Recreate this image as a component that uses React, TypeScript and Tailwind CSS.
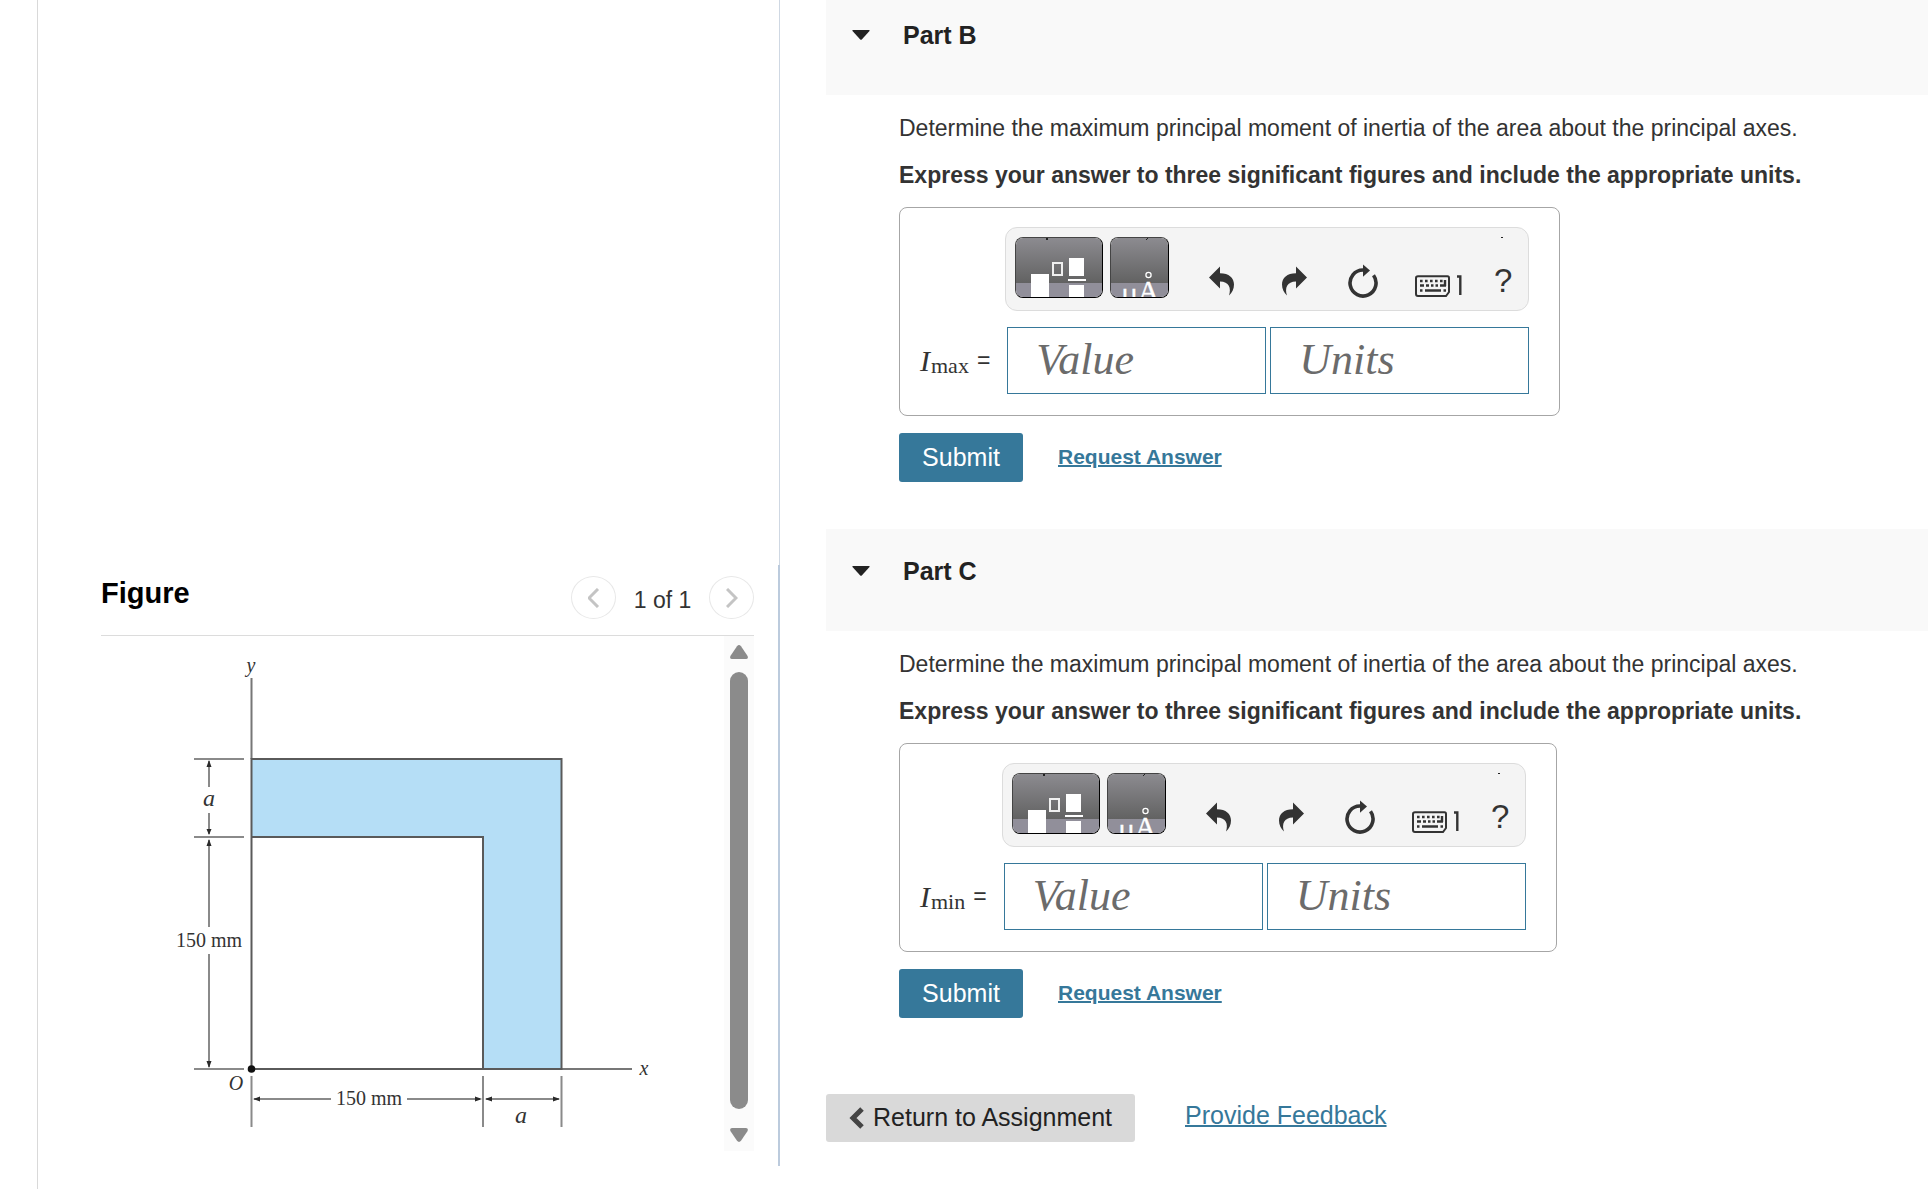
import type { ReactNode } from 'react'

type PartProps = {
  id: string
  title: string
  subscript: string
}

function TemplateIcon() {
  return (
    <svg width="86" height="59" viewBox="1 1 86 59" aria-hidden="true">
      <defs>
        <linearGradient id="templateShade" x1="0" y1="0" x2="0" y2="1">
          <stop offset="0" stopColor="#8d8c91" />
          <stop offset="1" stopColor="#626262" />
        </linearGradient>
      </defs>
      <rect width="88" height="46" fill="url(#templateShade)" />
      <rect y="46" width="88" height="15" fill="#918f9a" />
      <rect x="31" y="1" width="2" height="2" fill="#222" />
      <rect x="16" y="37" width="18" height="24" fill="#fff" />
      <rect x="38" y="26" width="9" height="12" fill="none" stroke="#f0f0f0" strokeWidth="2" />
      <rect x="54" y="21" width="15" height="18" fill="#fff" />
      <rect x="53" y="42" width="18" height="2" fill="#fff" />
      <rect x="54" y="48" width="15" height="13" fill="#fff" />
    </svg>
  )
}

function SymbolIcon() {
  return (
    <svg width="57" height="59" viewBox="1 1 57 59" aria-hidden="true">
      <rect width="59" height="46" fill="url(#templateShade)" />
      <rect y="46" width="59" height="15" fill="#918f9a" />
      <path d="M36 3l2-2" stroke="#222" />
      <circle cx="38.500" cy="38" r="2.600" fill="none" stroke="#fff" strokeWidth="1.300" />
      <g fill="#fff" stroke="#fff" strokeWidth=".4">
        <text x="12" y="66" fontSize="26" className="font-['Liberation_Sans',sans-serif]">
          μ
        </text>
        <text x="28" y="64" fontSize="29" className="font-['Liberation_Serif',serif]">
          A
        </text>
      </g>
    </svg>
  )
}

function UndoIcon() {
  return (
    <svg width="26" height="61" viewBox="0 0 26 61" fill="#333" aria-hidden="true">
      <path d="M0 40.5 11 29.5V36.2C20 36.2 25 41 25 47.5C25 52 23 56 20 58.5C22.500 51 20 44.500 11 44.500V51.500Z" />
    </svg>
  )
}

function RedoIcon() {
  return (
    <svg width="26" height="61" viewBox="0 0 26 61" fill="#333" aria-hidden="true">
      <path d="M26 40.5 15 29.5V36.2C6 36.2 1 41 1 47.5C1 52 3 56 6 58.5C3.500 51 6 44.500 15 44.500V51.500Z" />
    </svg>
  )
}

function ResetIcon() {
  return (
    <svg width="30" height="61" viewBox="0 0 30 61" aria-hidden="true">
      <path d="M15 33A13 13 0 1 0 25.5 38.3" fill="none" stroke="#333" strokeWidth="3.6" />
      <path d="M15 27.500 22 33.500 15 39.700Z" fill="#333" />
    </svg>
  )
}

function KeyboardIcon() {
  return (
    <svg width="47" height="61" viewBox="0 0 47 61" fill="none" stroke="#333" aria-hidden="true">
      <path d="M3 39.300H32.500Q34 39.300 34 41V55L31 59H3Q1 59 1 57V41Q1 39.300 3 39.300Z" strokeWidth="2" />
      <path d="M5 44H28" strokeWidth="2.4" strokeDasharray="2.600 2.400" />
      <path d="M5 48.500H9M11 48.500H14M16 48.500H18.500M20.500 48.500H23M25 48.500H31M30 43V49" strokeWidth="2.4" />
      <path d="M5 53.500H7.500M10 53.500H26M28.500 53.500H31" strokeWidth="2.4" />
      <path d="M42 39.500H45.300V58" strokeWidth="2.4" />
    </svg>
  )
}

function HelpIcon() {
  return (
    <svg width="20" height="61" viewBox="0 0 20 61" fill="#333" aria-hidden="true">
      <rect x="6" width="2" height="1" fill="#222" />
      <text x="-1" y="55" fontSize="33" className="font-['Liberation_Sans',sans-serif]">
        ?
      </text>
    </svg>
  )
}

function Toolbar() {
  return (
    <div className="flex h-[84px] w-[524px] rounded-xl border border-[#dcdcdc] bg-[#f4f4f4] px-[9px] pt-[9px]">
      <button
        aria-label="Templates"
        className="h-[61px] w-[88px] overflow-hidden rounded-lg border border-black border-t-[#444] border-l-[#444]"
      >
        <TemplateIcon />
      </button>
      <button
        aria-label="Symbols"
        className="ml-[7px] h-[61px] w-[59px] overflow-hidden rounded-lg border border-black border-t-[#444] border-l-[#444]"
      >
        <SymbolIcon />
      </button>
      <button aria-label="Undo" className="ml-10 h-[61px]">
        <UndoIcon />
      </button>
      <button aria-label="Redo" className="ml-[46px] h-[61px]">
        <RedoIcon />
      </button>
      <button aria-label="Reset" className="ml-[41px] h-[61px]">
        <ResetIcon />
      </button>
      <button aria-label="Keyboard shortcuts" className="ml-[37px] h-[61px]">
        <KeyboardIcon />
      </button>
      <button aria-label="Help" className="ml-[33px] h-[61px]">
        <HelpIcon />
      </button>
    </div>
  )
}

function Field({ id, placeholder }: { id: string; placeholder: string }) {
  return (
    <input
      id={id}
      type="text"
      aria-label={placeholder}
      placeholder={placeholder}
      className="h-[67px] w-[259px] border border-[#36789a] bg-white pb-0.5 pl-7 font-['Liberation_Serif',serif] text-[44px] text-[#333] italic placeholder:text-[#6b6b6b]"
    />
  )
}

function Part({ id, title, subscript }: PartProps) {
  return (
    <section className="pb-[47px]">
      <header className="flex h-[102px] items-start gap-[33px] bg-[#f9f9f9] pt-7 pl-[26px]">
        <button aria-label={`Collapse ${title}`} className="flex h-7 items-center">
          <svg width="18" height="10" viewBox="0 0 18 10" fill="#222" aria-hidden="true">
            <path d="M1 0H17Q18 .3 17.500 1L10 9.300Q9 10.300 8 9.300L.5 1Q0 .3 1 0Z" />
          </svg>
        </button>
        <h2 className="text-[25px] leading-7 font-bold text-[#222]">{title}</h2>
      </header>
      <div className="pt-5 pl-[73px]">
        <p className="text-[23px] leading-[27px]">
          Determine the maximum principal moment of inertia of the area about the principal axes.
        </p>
        <p className="mt-5 text-[23px] leading-[27px] font-bold">
          Express your answer to three significant figures and include the appropriate units.
        </p>
        <div className="mt-[18px] flex w-fit items-end gap-[15px] rounded-lg border border-[#a6a6a6] pt-[19px] pr-[30px] pb-[21px] pl-5">
          <label htmlFor={id} className="flex h-[67px] items-center">
            <span className="font-['Liberation_Serif',serif] text-[30px] italic">I</span>
            <sub className="ml-px font-['Liberation_Serif',serif] text-[22px]">{subscript}</sub>
            <span className="ml-2 text-[23px]">=</span>
          </label>
          <div className="flex flex-col items-end gap-4">
            <Toolbar />
            <div className="flex gap-1">
              <Field id={id} placeholder="Value" />
              <Field id={`${id}-units`} placeholder="Units" />
            </div>
          </div>
        </div>
        <div className="mt-[17px] flex items-center gap-[35px]">
          <button className="h-[49px] w-[124px] rounded-[3px] bg-[#36789a] text-[25px] text-white">Submit</button>
          <a href="#" className="pb-0.5 text-[21px] font-bold text-[#36789a] underline decoration-2">
            Request Answer
          </a>
        </div>
      </div>
    </section>
  )
}

function PagerButton({ label, children }: { label: string; children: ReactNode }) {
  return (
    <button
      aria-label={label}
      className="flex h-[43px] w-[45px] items-center justify-center rounded-[50%] border border-[#e8e8e8]"
    >
      <svg width="12" height="20" viewBox="0 0 12 20" fill="none" stroke="#c4c4c4" strokeWidth="3" aria-hidden="true">
        {children}
      </svg>
    </button>
  )
}

function Diagram() {
  return (
    <svg width="560" height="515" viewBox="101 636 560 515" role="img" aria-label="L-shaped area with dimensions">
      <path d="M251.500 759H561.500V1069H483V837H251.500Z" fill="#b5def6" />
      <g fill="none" stroke="#8a8a8a" strokeWidth="2">
        <path d="M194 759H244M194 837H244M194 1069H244" />
        <path d="M209 761V787M209 813V834M209 840V927M209 954V1067" />
        <path d="M251.500 1076V1127M483 1076V1127M561.500 1076V1127" />
        <path d="M254 1099H331M407 1099H480M486 1099H559" />
        <path d="M251.500 678V759M561 1069H632" stroke="#777" />
      </g>
      <g fill="none" stroke="#5a5a5a" strokeWidth="2">
        <path d="M251.500 1069V759H561.500V1069Z" />
        <path d="M251.500 837H483V1069" />
      </g>
      <g fill="#2a2a2a">
        <path d="M209 760l2.500 7h-5zM209 835l2.500-6h-5zM209 839l2.500 7h-5zM209 1068l2.500-7h-5z" />
        <path d="M253 1099l7-2.500v5zM482 1099l-7-2.500v5zM485 1099l7-2.500v5zM560 1099l-7-2.500v5z" />
        <circle cx="251.500" cy="1069" r="3.800" fill="#111" />
      </g>
      <g fill="#333" fontSize="20" textAnchor="middle" className="font-['Liberation_Serif',serif]">
        <text x="209" y="947">150 mm</text>
        <text x="369" y="1105">150 mm</text>
        <g className="italic">
          <text x="251" y="672">y</text>
          <text x="644" y="1075">x</text>
          <text x="236" y="1090">O</text>
          <text x="209" y="806" fontSize="24">
            a
          </text>
          <text x="521" y="1123" fontSize="24">
            a
          </text>
        </g>
      </g>
    </svg>
  )
}

function Scrollbar() {
  return (
    <div className="flex w-[30px] flex-col items-center justify-between bg-[#fbfbfb] py-[9px]">
      <svg width="18" height="14" viewBox="0 0 18 14" fill="#8b8b8b" aria-hidden="true">
        <path d="M7 1.200Q9-1 11 1.200L17.600 11Q18.500 14 16 14H2Q-.5 14 .4 11Z" />
      </svg>
      <div className="my-[13px] w-[18px] flex-1 rounded-full bg-[#8b8b8b]" />
      <svg width="18" height="14" viewBox="0 0 18 14" fill="#8b8b8b" className="mt-1.5" aria-hidden="true">
        <path d="M7 12.800Q9 15 11 12.800L17.600 3Q18.500 0 16 0H2Q-.5 0 .4 3Z" />
      </svg>
    </div>
  )
}

function FigurePanel() {
  return (
    <aside className="ml-[37px] flex flex-col border-l border-[#d9d9d9]">
      <div className="flex-1 border-r border-[#cfd8e3]" />
      <section className="mb-[23px] border-r-2 border-[#bccbdd] pr-6 pb-[15px] pl-[63px]">
        <div className="flex h-[71px] items-start justify-between border-b border-[#dcdcdc] pt-[11px]">
          <h2 className="text-[29px] leading-[34px] font-bold text-black">Figure</h2>
          <div className="flex items-center">
            <PagerButton label="Previous figure">
              <path d="M10 1 1 10l9 9" />
            </PagerButton>
            <span className="w-[93px] pt-1.5 text-center text-[23px]">1 of 1</span>
            <PagerButton label="Next figure">
              <path d="M1 1l9 9-9 9" />
            </PagerButton>
          </div>
        </div>
        <div className="flex justify-between">
          <Diagram />
          <Scrollbar />
        </div>
      </section>
    </aside>
  )
}

export default function App() {
  return (
    <div className="grid min-h-screen grid-cols-[195fr_287fr] overflow-hidden bg-white font-['Liberation_Sans',Arial,sans-serif] text-[#333]">
      <FigurePanel />
      <main className="-mt-[7px] pl-[46px]">
        <Part id="part-b" title="Part B" subscript="max" />
        <Part id="part-c" title="Part C" subscript="min" />
        <footer className="mt-[29px] flex items-center gap-[50px]">
          <button className="flex h-12 items-center gap-[9px] rounded-[3px] bg-[#d9d9d9] px-[23px] text-[25px] text-[#222]">
            <svg width="15" height="22" viewBox="0 0 15 22" fill="none" stroke="#444" strokeWidth="5" aria-hidden="true">
              <path d="M13 2 4 11l9 9" />
            </svg>
            Return to Assignment
          </button>
          <a href="#" className="pb-1 text-[25px] text-[#36789a] underline decoration-2">
            Provide Feedback
          </a>
        </footer>
      </main>
    </div>
  )
}
